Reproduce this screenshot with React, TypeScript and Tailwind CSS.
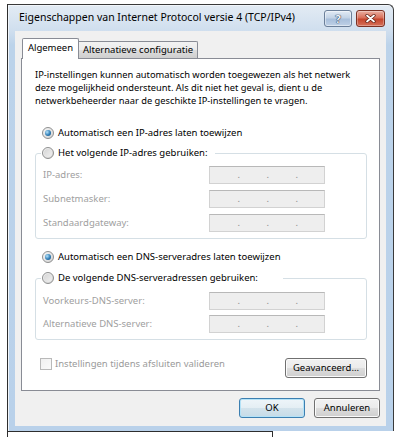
import React from "react";

function Radio({ checked }: { checked?: boolean }) {
  return (
    <span className="w-[12px] h-[12px] shrink-0 rounded-full border border-[#8e8f8f] bg-[linear-gradient(135deg,#f7f7f7,#d3d3d3)] flex items-center justify-center">
      {checked ? (
        <span className="w-[6px] h-[6px] rounded-full bg-[radial-gradient(circle_at_35%_35%,#b6e3fa,#2f7db6_55%,#1a4e7a)]" />
      ) : (
        <span className="w-[8px] h-[8px] rounded-full bg-[linear-gradient(135deg,#d6d6d6,#f0f0f0)]" />
      )}
    </span>
  );
}

function IpField() {
  return (
    <div className="w-[116px] h-[18px] border border-[#d2d2d2] border-t-[#b8b8b8] bg-[#eeeeee] flex text-[#8c8c8c] leading-[16px]">
      <span className="w-[30px] text-right">.</span>
      <span className="w-[29px] text-right">.</span>
      <span className="w-[29px] text-right">.</span>
    </div>
  );
}

function FieldRow({ label }: { label: string }) {
  return (
    <div className="flex items-center h-[18px]">
      <span className="ml-[7px] w-[166px] text-[#a0a0a0]">{label}</span>
      <IpField />
    </div>
  );
}

function Win7Button({
  children,
  w,
  primary,
}: {
  children: React.ReactNode;
  w: string;
  primary?: boolean;
}) {
  return (
    <div
      className={
        primary
          ? "w-[66px] h-[20px] rounded-[3px] border border-[#3c7fb1] shadow-[inset_0_0_0_1px_#b4e2f7] bg-[linear-gradient(#eef5f9_0%,#e4eef4_50%,#d3e3ec_50%,#c6dbe7_100%)] flex items-center justify-center text-black"
          : w === "g"
          ? "w-[82px] h-[20px] mt-[1px] rounded-[3px] border border-[#707070] shadow-[inset_0_0_0_1px_#fbfbfb] bg-[linear-gradient(#f2f2f2_0%,#ebebeb_50%,#dddddd_50%,#cfcfcf_100%)] flex items-center justify-center text-black"
          : "w-[66px] h-[20px] rounded-[3px] border border-[#707070] shadow-[inset_0_0_0_1px_#fbfbfb] bg-[linear-gradient(#f2f2f2_0%,#ebebeb_50%,#dddddd_50%,#cfcfcf_100%)] flex items-center justify-center text-black"
      }
    >
      {children}
    </div>
  );
}

export default function App() {
  return (
    <div className="w-[395px] h-[437px] bg-white overflow-hidden [font-family:'Noto_Sans','Open_Sans',sans-serif] text-black">
      <div className="ml-[7px] mt-[4px] h-[433px] border-l border-[#2e2e2e]">
        {/* window */}
        <div className="w-[386px] border-t border-r border-[#3a3a3a] rounded-tr-[6px] bg-[linear-gradient(#e3ebf4,#cfdeee_26px,#bcd3ea_40px,#b9d1ea)] shadow-[inset_1px_1px_0_#f2f6fb]">
          {/* title bar */}
          <div className="h-[26px] flex items-center pl-[11px] pr-[8px]">
            <span className="text-[10.5px] text-black whitespace-nowrap flex-1">
              Eigenschappen van Internet Protocol versie 4 (TCP/IPv4)
            </span>
            <div className="flex gap-[4px] mt-[1px]">
              <div className="w-[28px] h-[17px] rounded-[3px] border border-[#6b7f99] bg-[linear-gradient(#e2ebf5_0%,#c3d3e6_45%,#a8bfdb_55%,#bfd1e6_100%)] shadow-[inset_0_0_0_1px_rgba(255,255,255,0.45)] flex items-center justify-center">
                <span className="text-[11px] font-bold leading-none text-[#f4f7fb] [text-shadow:0_0_1px_#2f4360,0_0_1px_#2f4360,0_0_1px_#2f4360]">
                  ?
                </span>
              </div>
              <div className="w-[29px] h-[17px] rounded-[3px] border border-[#7b3124] bg-[linear-gradient(#eab0a2_0%,#d9705a_45%,#c4452d_55%,#d6725b_100%)] shadow-[inset_0_0_0_1px_rgba(255,255,255,0.3)] flex items-center justify-center">
                <svg width="11" height="9" viewBox="0 0 11 9">
                  <path d="M2 1.5 L9 7.5 M9 1.5 L2 7.5" stroke="#5a1d12" strokeWidth="3.2" strokeLinecap="round" />
                  <path d="M2 1.5 L9 7.5 M9 1.5 L2 7.5" stroke="#ffffff" strokeWidth="1.8" strokeLinecap="round" />
                </svg>
              </div>
            </div>
          </div>
          {/* frame + client */}
          <div className="pl-[7px] pr-[7px] pb-[5px]">
            <div className="w-[371px] h-[395px] bg-[#f0f0f0] flex flex-col text-[9.5px]">
              {/* tabs */}
              <div className="flex items-end mt-[7px] ml-[7px] h-[21px] relative z-10 -mb-px">
                <div className="w-[57px] h-[21px] bg-white border-l border-t border-r border-[#898c95] rounded-t-[2px] flex items-center justify-center pb-px">
                  Algemeen
                </div>
                <div className="w-[119px] h-[17px] mb-px border-t border-r border-[#898c95] rounded-tr-[2px] bg-[linear-gradient(#f2f2f2_0%,#ebebeb_50%,#dddddd_50%,#cfcfcf_100%)] flex items-center justify-center pt-px">
                  Alternatieve configuratie
                </div>
              </div>
              {/* panel */}
              <div className="ml-[6px] w-[359px] h-[333px] bg-white border border-[#898c95] flex flex-col">
                <p className="mt-[9px] ml-[13px] text-[9.3px] leading-[13px] whitespace-nowrap">
                  IP-instellingen kunnen automatisch worden toegewezen als het netwerk
                  <br />
                  deze mogelijkheid ondersteunt. Als dit niet het geval is, dient u de
                  <br />
                  netwerkbeheerder naar de geschikte IP-instellingen te vragen.
                </p>

                <div className="mt-[19px] ml-[20px] h-[14px] flex items-center gap-[4px]">
                  <Radio checked />
                  <span>Automatisch een IP-adres laten toewijzen</span>
                </div>

                <fieldset className="mt-[6px] ml-[13px] w-[332px] border border-[#d5dfe5] rounded-[3px]">
                  <legend className="ml-[5px] w-[174px] h-[14px] pl-px flex items-center gap-[4px]">
                    <Radio />
                    <span>Het volgende IP-adres gebruiken:</span>
                  </legend>
                  <div className="pt-[6px] pb-[6px] flex flex-col gap-[6px]">
                    <FieldRow label="IP-adres:" />
                    <FieldRow label="Subnetmasker:" />
                    <FieldRow label="Standaardgateway:" />
                  </div>
                </fieldset>

                <div className="mt-[11px] ml-[20px] h-[14px] flex items-center gap-[4px]">
                  <Radio checked />
                  <span>Automatisch een DNS-serveradres laten toewijzen</span>
                </div>

                <fieldset className="mt-[7px] ml-[13px] w-[332px] border border-[#d5dfe5] rounded-[3px]">
                  <legend className="ml-[5px] w-[242px] h-[14px] pl-px flex items-center gap-[4px]">
                    <Radio />
                    <span>De volgende DNS-serveradressen gebruiken:</span>
                  </legend>
                  <div className="pt-[7px] pb-[6px] flex flex-col gap-[5px]">
                    <FieldRow label="Voorkeurs-DNS-server:" />
                    <FieldRow label="Alternatieve DNS-server:" />
                  </div>
                </fieldset>

                <div className="mt-[17px] ml-[18px] w-[327px] flex justify-between items-start">
                  <div className="h-[14px] flex items-center gap-[3px]">
                    <span className="w-[12px] h-[12px] border border-[#b9b9b9] bg-[linear-gradient(135deg,#f0f0f0,#fafafa)]" />
                    <span className="text-[#9a9a9a]">Instellingen tijdens afsluiten valideren</span>
                  </div>
                  <Win7Button w="g">Geavanceerd...</Win7Button>
                </div>
              </div>

              {/* OK / Annuleren */}
              <div className="mt-[7px] pr-[6px] flex justify-end gap-[9px]">
                <Win7Button w="n" primary>
                  OK
                </Win7Button>
                <Win7Button w="n">Annuleren</Win7Button>
              </div>
            </div>
          </div>
        </div>
        {/* bottom shadow line */}
        <div className="w-[265px] h-[6px] border-t border-r border-[#2e2e2e]" />
      </div>
    </div>
  );
}
